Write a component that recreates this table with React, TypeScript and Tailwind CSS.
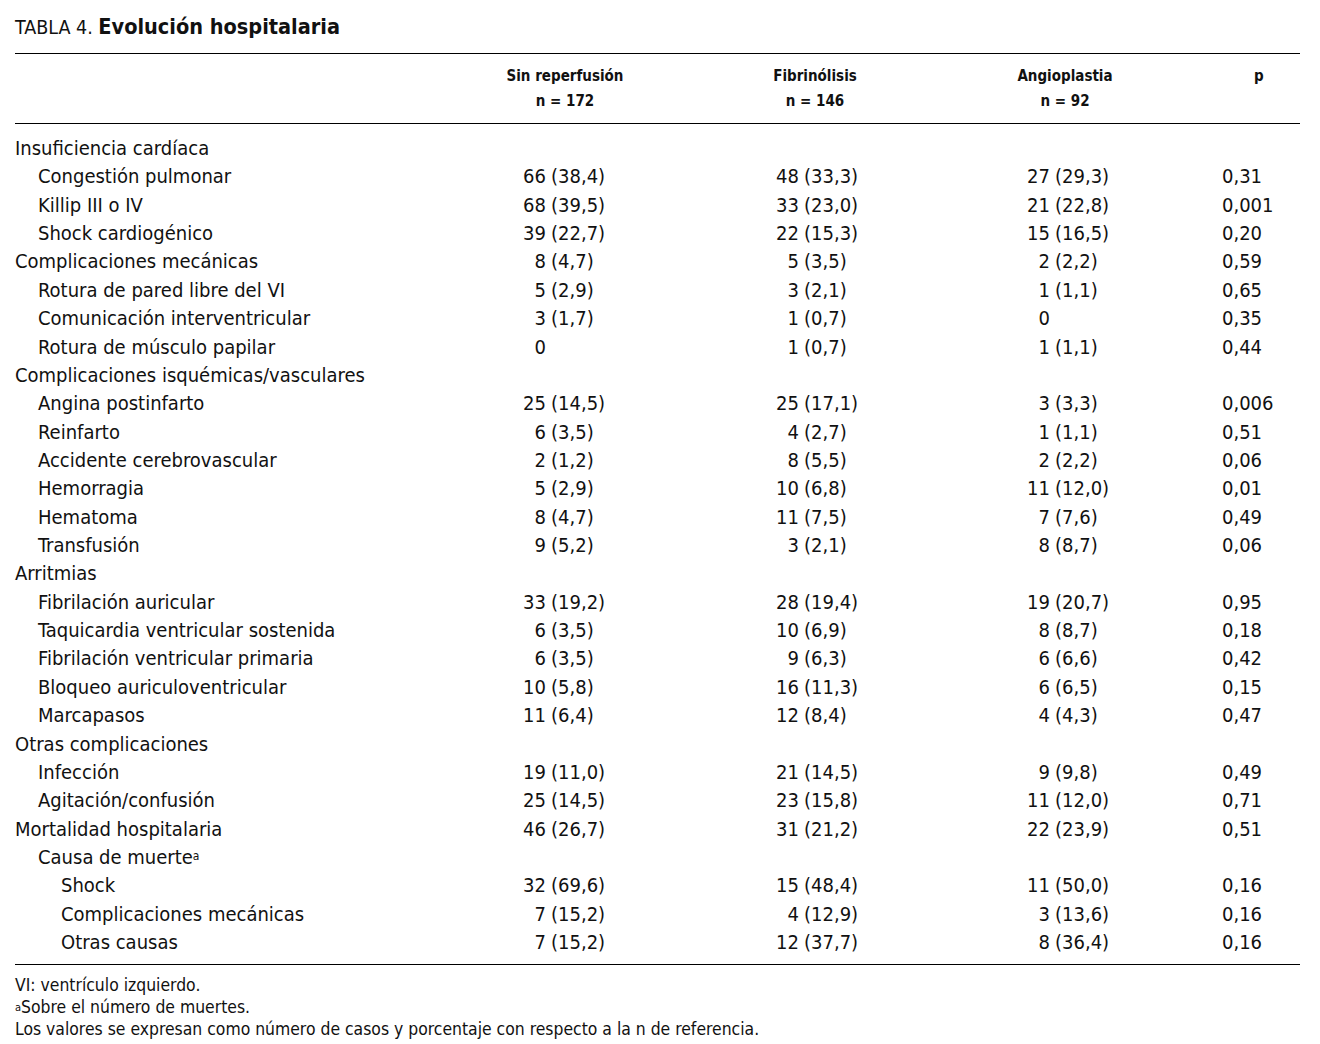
import React from 'react';

type Row = {
  label: string;
  level: 0 | 1 | 2;
  sup?: string;
  cells?: [string, string][];
  p?: string;
};

const rows: Row[] = [
  { label: 'Insuficiencia cardíaca', level: 0 },
  { label: 'Congestión pulmonar', level: 1, cells: [['66', '(38,4)'], ['48', '(33,3)'], ['27', '(29,3)']], p: '0,31' },
  { label: 'Killip III o IV', level: 1, cells: [['68', '(39,5)'], ['33', '(23,0)'], ['21', '(22,8)']], p: '0,001' },
  { label: 'Shock cardiogénico', level: 1, cells: [['39', '(22,7)'], ['22', '(15,3)'], ['15', '(16,5)']], p: '0,20' },
  { label: 'Complicaciones mecánicas', level: 0, cells: [['8', '(4,7)'], ['5', '(3,5)'], ['2', '(2,2)']], p: '0,59' },
  { label: 'Rotura de pared libre del VI', level: 1, cells: [['5', '(2,9)'], ['3', '(2,1)'], ['1', '(1,1)']], p: '0,65' },
  { label: 'Comunicación interventricular', level: 1, cells: [['3', '(1,7)'], ['1', '(0,7)'], ['0', '']], p: '0,35' },
  { label: 'Rotura de músculo papilar', level: 1, cells: [['0', ''], ['1', '(0,7)'], ['1', '(1,1)']], p: '0,44' },
  { label: 'Complicaciones isquémicas/vasculares', level: 0 },
  { label: 'Angina postinfarto', level: 1, cells: [['25', '(14,5)'], ['25', '(17,1)'], ['3', '(3,3)']], p: '0,006' },
  { label: 'Reinfarto', level: 1, cells: [['6', '(3,5)'], ['4', '(2,7)'], ['1', '(1,1)']], p: '0,51' },
  { label: 'Accidente cerebrovascular', level: 1, cells: [['2', '(1,2)'], ['8', '(5,5)'], ['2', '(2,2)']], p: '0,06' },
  { label: 'Hemorragia', level: 1, cells: [['5', '(2,9)'], ['10', '(6,8)'], ['11', '(12,0)']], p: '0,01' },
  { label: 'Hematoma', level: 1, cells: [['8', '(4,7)'], ['11', '(7,5)'], ['7', '(7,6)']], p: '0,49' },
  { label: 'Transfusión', level: 1, cells: [['9', '(5,2)'], ['3', '(2,1)'], ['8', '(8,7)']], p: '0,06' },
  { label: 'Arritmias', level: 0 },
  { label: 'Fibrilación auricular', level: 1, cells: [['33', '(19,2)'], ['28', '(19,4)'], ['19', '(20,7)']], p: '0,95' },
  { label: 'Taquicardia ventricular sostenida', level: 1, cells: [['6', '(3,5)'], ['10', '(6,9)'], ['8', '(8,7)']], p: '0,18' },
  { label: 'Fibrilación ventricular primaria', level: 1, cells: [['6', '(3,5)'], ['9', '(6,3)'], ['6', '(6,6)']], p: '0,42' },
  { label: 'Bloqueo auriculoventricular', level: 1, cells: [['10', '(5,8)'], ['16', '(11,3)'], ['6', '(6,5)']], p: '0,15' },
  { label: 'Marcapasos', level: 1, cells: [['11', '(6,4)'], ['12', '(8,4)'], ['4', '(4,3)']], p: '0,47' },
  { label: 'Otras complicaciones', level: 0 },
  { label: 'Infección', level: 1, cells: [['19', '(11,0)'], ['21', '(14,5)'], ['9', '(9,8)']], p: '0,49' },
  { label: 'Agitación/confusión', level: 1, cells: [['25', '(14,5)'], ['23', '(15,8)'], ['11', '(12,0)']], p: '0,71' },
  { label: 'Mortalidad hospitalaria', level: 0, cells: [['46', '(26,7)'], ['31', '(21,2)'], ['22', '(23,9)']], p: '0,51' },
  { label: 'Causa de muerte', level: 1, sup: 'a' },
  { label: 'Shock', level: 2, cells: [['32', '(69,6)'], ['15', '(48,4)'], ['11', '(50,0)']], p: '0,16' },
  { label: 'Complicaciones mecánicas', level: 2, cells: [['7', '(15,2)'], ['4', '(12,9)'], ['3', '(13,6)']], p: '0,16' },
  { label: 'Otras causas', level: 2, cells: [['7', '(15,2)'], ['12', '(37,7)'], ['8', '(36,4)']], p: '0,16' },
];

const indent = ['pl-0', 'pl-[23px]', 'pl-[46px]'];

function Cell({ value }: { value?: [string, string] }) {
  if (!value) return <div />;
  return (
    <div className="flex">
      <span className="w-[40px] text-right">{value[0]}</span>
      {value[1] && <span className="pl-[5px]">{value[1]}</span>}
    </div>
  );
}

export default function App() {
  return (
    <div className="bg-white text-[#111] font-['DejaVu_Sans_Condensed','Liberation_Sans',sans-serif] w-[1320px] h-[1044px] pl-[15px] pr-[20px]">
      <h1 className="h-[42px] pt-[14px] text-[19.5px] leading-[28px]">
        TABLA 4. <span className="font-bold text-[21.5px] leading-none">Evolución hospitalaria</span>
      </h1>

      <div className="mt-[11px] border-t border-black" />

      {/* cabecera */}
      <div className="grid grid-cols-[425px_250px_250px_250px_1fr] pt-[10px] pb-[9px] text-[15px] leading-[25px] font-bold">
        <div />
        <div className="text-center">
          <div>Sin reperfusión</div>
          <div>n = 172</div>
        </div>
        <div className="text-center">
          <div>Fibrinólisis</div>
          <div>n = 146</div>
        </div>
        <div className="text-center">
          <div>Angioplastia</div>
          <div>n = 92</div>
        </div>
        <div className="pl-[64px]">p</div>
      </div>

      <div className="border-t border-black" />

      {/* cuerpo */}
      <div className="pt-[10px] pb-[8px] text-[20px]">
        {rows.map((row, i) => (
          <div
            key={i}
            className="grid grid-cols-[491px_253px_251px_212px_1fr] h-[28.36px] leading-[28.36px]"
          >
            <div className={indent[row.level]}>
              {row.label}
              {row.sup && <sup className="text-[12px] align-top leading-none relative top-[7px]">{row.sup}</sup>}
            </div>
            <Cell value={row.cells?.[0]} />
            <Cell value={row.cells?.[1]} />
            <Cell value={row.cells?.[2]} />
            <div>{row.p}</div>
          </div>
        ))}
      </div>

      <div className="border-t border-black" />

      {/* notas */}
      <div className="pt-[10px] text-[17.4px] leading-[21.8px]">
        <div>VI: ventrículo izquierdo.</div>
        <div>
          <sup className="text-[11px] align-top leading-none relative top-[5px]">a</sup>Sobre el número de muertes.
        </div>
        <div>Los valores se expresan como número de casos y porcentaje con respecto a la n de referencia.</div>
      </div>
    </div>
  );
}
